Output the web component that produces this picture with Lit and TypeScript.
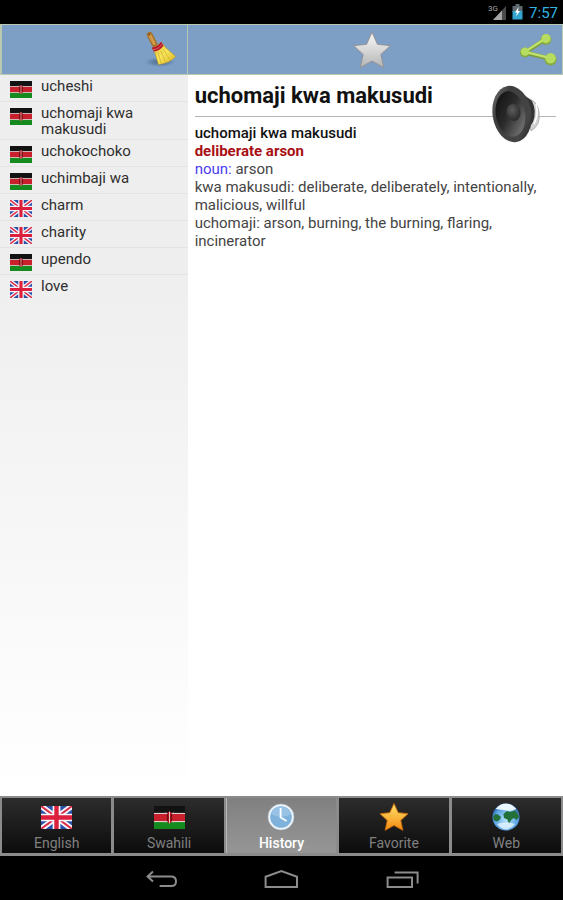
import { LitElement, html, css, svg, TemplateResult } from "lit";
import { customElement, property, state } from "lit/decorators.js";
import { classMap } from "lit/directives/class-map.js";

type Lang = "sw" | "en";

const kenyaFlag = html`<svg class="flag" viewBox="0 0 24 18" preserveAspectRatio="none" aria-hidden="true">
  <rect width="24" height="18" fill="#e4dede" />
  <rect width="24" height="5.4" fill="#121212" />
  <rect y="6.2" width="24" height="5.6" fill="#c8202c" />
  <rect y="12.6" width="24" height="5.4" fill="#158a1e" />
  <path d="M8.6 4.6 15.4 13.4M15.4 4.6 8.6 13.4" stroke="#d9a0a0" stroke-width=".3" />
  <ellipse cx="12" cy="9" rx="2.2" ry="4.6" fill="#b01420" />
  <path d="M12 4.4V13.6" stroke="#f0d4d4" stroke-width=".7" />
  <path d="M10.2 6.4Q11.4 9 10.2 11.6M13.8 6.4Q12.6 9 13.8 11.6" stroke="#3c0808" stroke-width=".6" fill="none" />
</svg>`;

const ukFlag = html`<svg class="flag" viewBox="0 0 24 18" preserveAspectRatio="none" aria-hidden="true">
  <rect width="24" height="18" fill="#2b50a8" />
  <path d="M0 0 24 18M24 0 0 18" stroke="#f4f4fa" stroke-width="4.4" />
  <path d="M0 0 24 18M24 0 0 18" stroke="#dd2b45" stroke-width="1.5" />
  <path d="M12 0V18M0 9H24" stroke="#f7f7fb" stroke-width="6" />
  <path d="M12 0V18M0 9H24" stroke="#dc1f3c" stroke-width="3.4" />
</svg>`;

const STAR = "M20 2 25.6 14.2 38.6 15.6 29 24.6 31.8 37.8 20 31.2 8.2 37.8 11 24.6 1.4 15.6 14.4 14.2Z";

const star = (id: string, from: string, to: string, edge: string) => html`<svg viewBox="0 0 40 40" aria-hidden="true">
  <defs>
    <linearGradient id=${id} x1="0" y1="0" x2="0" y2="1">
      <stop offset="0" stop-color=${from} />
      <stop offset="1" stop-color=${to} />
    </linearGradient>
  </defs>
  <path d=${STAR} fill="url(#${id})" stroke=${edge} stroke-width="1.2" stroke-linejoin="round" />
</svg>`;

const broom = html`<svg viewBox="0 0 34 40" aria-hidden="true">
  <defs>
    <radialGradient id="broom-shade">
      <stop offset="0" stop-color="#2f4d70" stop-opacity=".7" />
      <stop offset="1" stop-color="#2f4d70" stop-opacity="0" />
    </radialGradient>
    <linearGradient id="straw" x1="0" y1="0" x2="1" y2="1">
      <stop offset="0" stop-color="#d9b52c" />
      <stop offset=".5" stop-color="#f7e65c" />
      <stop offset="1" stop-color="#d8b020" />
    </linearGradient>
  </defs>
  <ellipse cx="15" cy="32" rx="15" ry="5" fill="url(#broom-shade)" />
  <path d="M4.8 5 9.4 14" stroke="#a5702a" stroke-width="6" stroke-linecap="round" />
  <path d="M4.8 5 9 13.4" stroke="#d09a48" stroke-width="3" stroke-linecap="round" />
  <circle cx="4.4" cy="4.4" r="1" fill="#6d4614" />
  <path d="M7.4 18.4 16.6 12.6 21 18 30.6 26.4Q25 33 13.4 34.6L9.8 22.6Z" fill="url(#straw)" stroke="#b89420" stroke-width=".6" />
  <path d="M13 22 16 33M16 21 20.4 32M18.4 19.6 25 30" stroke="#d3ac28" stroke-width=".7" fill="none" />
  <path d="M6.8 17.6Q13 17 16 11.8L18.6 15.6Q15 21 8.6 21.6Z" fill="#b8152a" />
  <path d="M7.8 19.8Q14 19 17.4 13.8" stroke="#e9a0a0" stroke-width=".6" fill="none" />
</svg>`;

const share = html`<svg viewBox="0 0 38 34" aria-hidden="true">
  <g fill="none" stroke="#7d9c3c" stroke-width="4.2">
    <path d="M6 19.6 26 6.4M6 19.6 31 25.6" />
  </g>
  <g fill="#86a83e">
    <circle cx="6" cy="19.4" r="5" /><circle cx="27" cy="6.4" r="5.4" /><circle cx="31.6" cy="26.4" r="6" />
  </g>
  <path d="M6 18.8 26 5.8M6 18.8 31 25" fill="none" stroke="#bfe26c" stroke-width="2.4" />
  <g fill="#b6dc60">
    <circle cx="6" cy="18.6" r="4.2" /><circle cx="27" cy="5.6" r="4.6" /><circle cx="31.6" cy="25.2" r="5.2" />
  </g>
</svg>`;

const speaker = html`<svg viewBox="0 0 52 60" aria-hidden="true">
  <defs>
    <linearGradient id="rim" x1="0" y1="0" x2="1" y2="1">
      <stop offset="0" stop-color="#7c7c7c" />
      <stop offset=".3" stop-color="#3e3e3e" />
      <stop offset=".75" stop-color="#454545" />
      <stop offset="1" stop-color="#1c1c1c" />
    </linearGradient>
    <linearGradient id="cone" x1="0" y1="0" x2=".9" y2="1">
      <stop offset="0" stop-color="#0c0c0c" />
      <stop offset=".5" stop-color="#2c2c2c" />
      <stop offset="1" stop-color="#808080" />
    </linearGradient>
    <radialGradient id="dome" cx=".45" cy=".35" r=".7">
      <stop offset="0" stop-color="#5c5c5c" />
      <stop offset="1" stop-color="#262626" />
    </radialGradient>
  </defs>
  <path d="M34 14Q46 15 48 28T40 47Z" fill="#d2d2d2" stroke="#a5a5a5" stroke-width=".8" />
  <path d="M45 20Q48 30 43 40" stroke="#fff" stroke-width="1.6" fill="none" />
  <path d="M28 7 41 17Q46 27 42 38L34 50Z" fill="#333" />
  <ellipse cx="21" cy="30" rx="19.4" ry="28.4" transform="rotate(-9 21 30)" fill="url(#rim)" />
  <ellipse cx="19.4" cy="30" rx="14.6" ry="23" transform="rotate(-9 19.4 30)" fill="url(#cone)" />
  <ellipse cx="22.4" cy="28.4" rx="7" ry="8.6" transform="rotate(-9 22.4 28.4)" fill="url(#dome)" />
</svg>`;

const clock = html`<svg viewBox="0 0 30 30" aria-hidden="true">
  <circle cx="15" cy="15" r="13" fill="#f2f6fa" stroke="#a9bccb" stroke-width=".6" />
  <circle cx="15" cy="15" r="10.8" fill="#7eb2dc" />
  <path d="M5 12A10.4 10.4 0 0 1 25 12Q15 18 5 12Z" fill="#98c3e6" />
  <path d="M14.6 6V15.6L20.6 19" fill="none" stroke="#fff" stroke-width="1.8" />
</svg>`;

const globe = html`<svg viewBox="0 0 30 30" aria-hidden="true">
  <defs>
    <radialGradient id="sea" cx=".5" cy=".6" r=".6">
      <stop offset="0" stop-color="#b4e2fb" />
      <stop offset=".7" stop-color="#5ba4e4" />
      <stop offset="1" stop-color="#1f509c" />
    </radialGradient>
  </defs>
  <circle cx="15" cy="15" r="13.6" fill="url(#sea)" />
  <path d="M4.6 7Q9 1.6 15 1.6T25.4 7Q20 9.6 15 8.6T4.6 7Z" fill="#eaf6fd" />
  <path d="M2 15 4 12 7 12.6 10 15 9 17.4 6.4 19.4 3 18.4ZM12.4 12 16 9 19 10 24 8.4 27 12 28 15 25.4 18 23 16 21 17 18 21.6 16.4 17.4 13 16Z" fill="#23703a" />
  <path d="M6 22Q15 18.6 24 22 20 27.4 15 27.4T6 22Z" fill="#e6f6ff" opacity=".8" />
</svg>`;

const navBack = svg`<path d="M10 2.6 4.6 7.6 10 12.6M5.4 7.6H28Q33 7.6 33 12.4T28 17H16.6" />`;
const navHome = svg`<path d="M2.6 18V7.8L18.4 2 34 7.8V18Z" />`;
const navRecent = svg`<path d="M4.6 8.4H29V18H4.6ZM11.6 3.6H34.6V14.4" />`;

interface Word { text: string; lang: Lang }

const HISTORY: Word[] = [
  { text: "ucheshi", lang: "sw" },
  { text: "uchomaji kwa makusudi", lang: "sw" },
  { text: "uchokochoko", lang: "sw" },
  { text: "uchimbaji wa", lang: "sw" },
  { text: "charm", lang: "en" },
  { text: "charity", lang: "en" },
  { text: "upendo", lang: "sw" },
  { text: "love", lang: "en" },
];

const buttonReset = css`
  button {
    margin: 0;
    padding: 0;
    border: 0;
    background: none;
    color: inherit;
    font: inherit;
    text-align: left;
    cursor: pointer;
  }
  svg {
    display: block;
  }
`;

@customElement("status-bar")
export class StatusBar extends LitElement {
  static styles = css`
    :host {
      display: flex;
      align-items: center;
      justify-content: flex-end;
      height: 24px;
      padding-right: 5px;
      background: #000;
      color: #33b5e5;
      font-size: 15px;
    }
    .signal { width: 19px; height: 18px; }
    .battery { width: 11px; height: 16px; margin: 0 6px 0 5px; }
    .net { font: 8px "Roboto", sans-serif; }
    time { line-height: 22px; padding-top: 2px; }
  `;
  render() {
    return html`
      <svg class="signal" viewBox="0 0 19 18" aria-label="3G signal">
        <path d="M18 3V17H5Z" fill="#4a4a4a" />
        <path d="M14 7.4V17H5Z" fill="#a6a6a6" />
        <text class="net" x="0" y="8" fill="#a6a6a6">3G</text>
      </svg>
      <svg class="battery" viewBox="0 0 11 16" aria-label="Charging">
        <path d="M3.5 0H7.5V2H10.5V8H.5V2H3.5Z" fill="#5d6a70" />
        <path d="M.5 7H10.5V15.5H.5Z" fill="#33a5d0" />
        <path d="M6.6 3 3 8.6H5L4 12.6 8 7H6Z" fill="#fff" />
      </svg>
      <time>7:57</time>
    `;
  }
}

@customElement("history-list")
export class HistoryList extends LitElement {
  @property({ attribute: false }) words: Word[] = [];

  static styles = [buttonReset, css`
    ul {
      margin: 0;
      padding: 0;
      list-style: none;
    }
    li + li {
      border-top: 1px solid #e3e3e3;
    }
    .row {
      display: flex;
      align-items: flex-start;
      gap: 9px;
      width: 100%;
      padding: 3px 24px 2px 10px;
      font-size: 15px;
      line-height: 16px;
      color: #2e2e2e;
    }
    .flag { flex: none; width: 22px; height: 17px; padding: 3px 0 1px; }
  `];

  render() {
    return html`<ul>
      ${this.words.map((w) => html`<li>
        <button class="row" @click=${() => this.dispatchEvent(new CustomEvent("pick", { detail: w.text }))}>
          ${w.lang === "sw" ? kenyaFlag : ukFlag}<span>${w.text}</span>
        </button>
      </li>`)}
    </ul>`;
  }
}

@customElement("word-entry")
export class WordEntry extends LitElement {
  static styles = [buttonReset, css`
    :host {
      display: block;
      position: relative;
      padding: 0 7px;
      color: #444;
      font-size: 15px;
      line-height: 18px;
    }
    h1 {
      margin: 0 0 7px;
      border-bottom: 1px solid #b4b4b4;
      color: #111;
      font-size: 22px;
      font-weight: 700;
      line-height: 41px;
    }
    p { margin: 0; }
    .head { color: #111; font-weight: 500; }
    .sense { color: #a80f14; font-weight: 700; }
    .pos { color: #4a3df0; }
    .listen { position: absolute; top: 9px; right: 20px; }
    .listen svg { width: 52px; height: 60px; }
  `];

  render() {
    return html`
      <h1>uchomaji kwa makusudi</h1>
      <button class="listen" aria-label="Listen">${speaker}</button>
      <p class="head">uchomaji kwa makusudi</p>
      <p class="sense">deliberate arson</p>
      <p><span class="pos">noun:</span> arson</p>
      <p>kwa makusudi: deliberate, deliberately, intentionally, malicious, willful</p>
      <p>uchomaji: arson, burning, the burning, flaring, incinerator</p>
    `;
  }
}

@customElement("app-root")
export class AppRoot extends LitElement {
  @state() private tab = "History";

  static styles = [buttonReset, css`
    :host {
      display: flex;
      flex-direction: column;
      min-height: 100vh;
      background: #fff;
      font-family: "Roboto", sans-serif;
    }
    .main {
      flex: 1;
      display: grid;
      grid-template-columns: 1fr 2fr;
      grid-template-rows: auto 1fr;
    }
    .bar {
      display: flex;
      align-items: center;
      height: 51px;
      box-sizing: border-box;
      border: 1px solid #b9c9b0;
      background: #7d9fc6;
    }
    .bar.side { justify-content: flex-end; padding-right: 8px; border-left-width: 2px; }
    .bar.word { display: grid; grid-template-columns: 1fr auto 1fr; padding-right: 5px; border-left-width: 0; }
    .broom svg { width: 34px; height: 40px; }
    .fav { grid-column: 2; }
    .fav svg { width: 40px; height: 40px; }
    .share { justify-self: end; }
    .share svg { width: 38px; height: 34px; }
    .list { background: linear-gradient(#eee, #eee 25%, #fff); }
    .tabs {
      display: grid;
      grid-template-columns: repeat(5, 1fr);
      gap: 3px;
      padding: 2px 2px 3px;
      background: #8b8b8b;
    }
    .tab {
      display: flex;
      flex-direction: column;
      align-items: center;
      gap: 2px;
      height: 55px;
      padding-top: 3px;
      box-sizing: border-box;
      background: linear-gradient(#2c2c2c, #0c0c0c);
      color: #808080;
      font-size: 14px;
      line-height: 16px;
    }
    .tab.on {
      background: linear-gradient(#808080, #969696);
      color: #fff;
      font-weight: 500;
      box-shadow: -1px 0 #b8b8b8;
    }
    .icon { display: grid; place-items: center; height: 32px; }
    .icon svg { width: 30px; height: 30px; }
    .icon .flag { width: 31px; height: 23px; }
    .nav {
      display: flex;
      justify-content: center;
      align-items: center;
      gap: 83px;
      height: 44px;
      background: #000;
    }
    .nav svg { width: 37px; height: 21px; fill: none; stroke: #8c8c8c; stroke-width: 2; margin-top: 2px; }
  `];

  private tabs: [string, TemplateResult][] = [
    ["English", ukFlag],
    ["Swahili", kenyaFlag],
    ["History", clock],
    ["Favorite", star("gold", "#ffe36a", "#f58a12", "#c86a08")],
    ["Web", globe],
  ];

  private navs: [string, unknown][] = [["Back", navBack], ["Home", navHome], ["Recent apps", navRecent]];

  render() {
    return html`
      <status-bar></status-bar>
      <main class="main">
        <header class="bar side"><button class="broom" aria-label="Clear history">${broom}</button></header>
        <header class="bar word">
          <button class="fav" aria-label="Add to favorites">${star("silver", "#fafafa", "#b4b4b4", "#9096a0")}</button>
          <button class="share" aria-label="Share">${share}</button>
        </header>
        <section class="list"><history-list .words=${HISTORY}></history-list></section>
        <word-entry></word-entry>
      </main>
      <nav class="tabs">
        ${this.tabs.map(([name, icon]) => html`<button
          class=${classMap({ tab: true, on: this.tab === name })}
          @click=${() => (this.tab = name)}
        ><span class="icon">${icon}</span>${name}</button>`)}
      </nav>
      <footer class="nav">
        ${this.navs.map(([label, shape]) => html`<button aria-label=${label}><svg viewBox="0 0 37 21">${shape}</svg></button>`)}
      </footer>
    `;
  }
}
